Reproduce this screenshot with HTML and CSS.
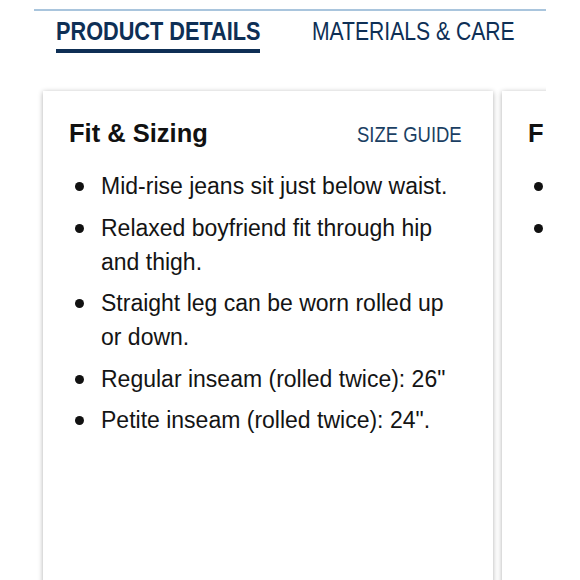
FILE: index.html
```html
<!DOCTYPE html>
<html lang="en">
<head>
<meta charset="utf-8">
<title>Product Details</title>
<link rel="stylesheet" href="styles.css">
</head>
<body>
<div class="page">
  <nav class="tabs">
    <a class="tab tab-active"><span class="tab-label">PRODUCT DETAILS</span></a>
    <a class="tab tab-second"><span class="tab-label">MATERIALS &amp; CARE</span></a>
  </nav>
  <div class="cards">
    <section class="card">
      <header class="card-head">
        <h2 class="card-title">Fit &amp; Sizing</h2>
        <a class="card-link"><span class="card-link-label">SIZE GUIDE</span></a>
      </header>
      <ul class="bullets">
        <li class="bullet">Mid-rise jeans sit just below waist.</li>
        <li class="bullet">Relaxed boyfriend fit through hip and thigh.</li>
        <li class="bullet">Straight leg can be worn rolled up or down.</li>
        <li class="bullet">Regular inseam (rolled twice): 26"</li>
        <li class="bullet">Petite inseam (rolled twice): 24".</li>
      </ul>
    </section>
    <section class="card">
      <header class="card-head">
        <h2 class="card-title">F</h2>
      </header>
      <ul class="bullets">
        <li class="bullet"></li>
        <li class="bullet"></li>
      </ul>
    </section>
  </div>
</div>
</body>
</html>
```

FILE: styles.css
```css
html, body {
  margin: 0;
  padding: 0;
  background: #ffffff;
}

body {
  font-family: "Liberation Sans", Arial, sans-serif;
  color: #111111;
}

.page {
  width: 512px;
  margin: 9px 0 0 34px;
  border-top: 2px solid #a9c5dd;
  overflow: hidden;
}

.tabs {
  display: flex;
  gap: 52px;
  padding: 5px 0 0 22px;
}

.tab {
  display: block;
  font-size: 25px;
  line-height: 30px;
  color: #0e2f55;
  padding-bottom: 3px;
  border-bottom: 4px solid transparent;
  white-space: nowrap;
}

.tab-label {
  display: inline-block;
  transform-origin: left center;
}

.tab-active {
  width: 204px;
  font-weight: 700;
  border-bottom-color: #0e2f55;
}

.tab-active .tab-label {
  transform: scaleX(0.868);
}

.tab-second {
  width: 202px;
}

.tab-second .tab-label {
  transform: scaleX(0.845);
}

.cards {
  display: flex;
  gap: 9px;
  margin-top: 38px;
  padding: 0 0 0 9px;
}

.card {
  flex: 0 0 450px;
  box-sizing: border-box;
  min-height: 520px;
  padding: 27px 31px 0 26px;
  background: #ffffff;
  box-shadow: 0 1px 5px rgba(0, 0, 0, 0.32);
}

.card-head {
  display: flex;
  justify-content: space-between;
  align-items: baseline;
}

.card-title {
  margin: 0;
  font-size: 25.5px;
  line-height: 30px;
  font-weight: 700;
  color: #111111;
}

.card-link {
  font-size: 22px;
  color: #1b3f63;
  white-space: nowrap;
}

.card-link-label {
  display: inline-block;
  transform: scaleX(0.84);
  transform-origin: right center;
}

.bullets {
  list-style: none;
  margin: 21px 0 0 0;
  padding: 0 0 0 6px;
  display: flex;
  flex-direction: column;
  gap: 7.5px;
}

.bullet {
  display: flex;
  align-items: flex-start;
  gap: 17px;
  min-height: 34px;
  font-size: 23px;
  line-height: 34px;
  color: #141414;
}

.bullet::before {
  content: "";
  flex: 0 0 9px;
  height: 9px;
  margin-top: 13px;
  border-radius: 50%;
  background: #111111;
}
```
